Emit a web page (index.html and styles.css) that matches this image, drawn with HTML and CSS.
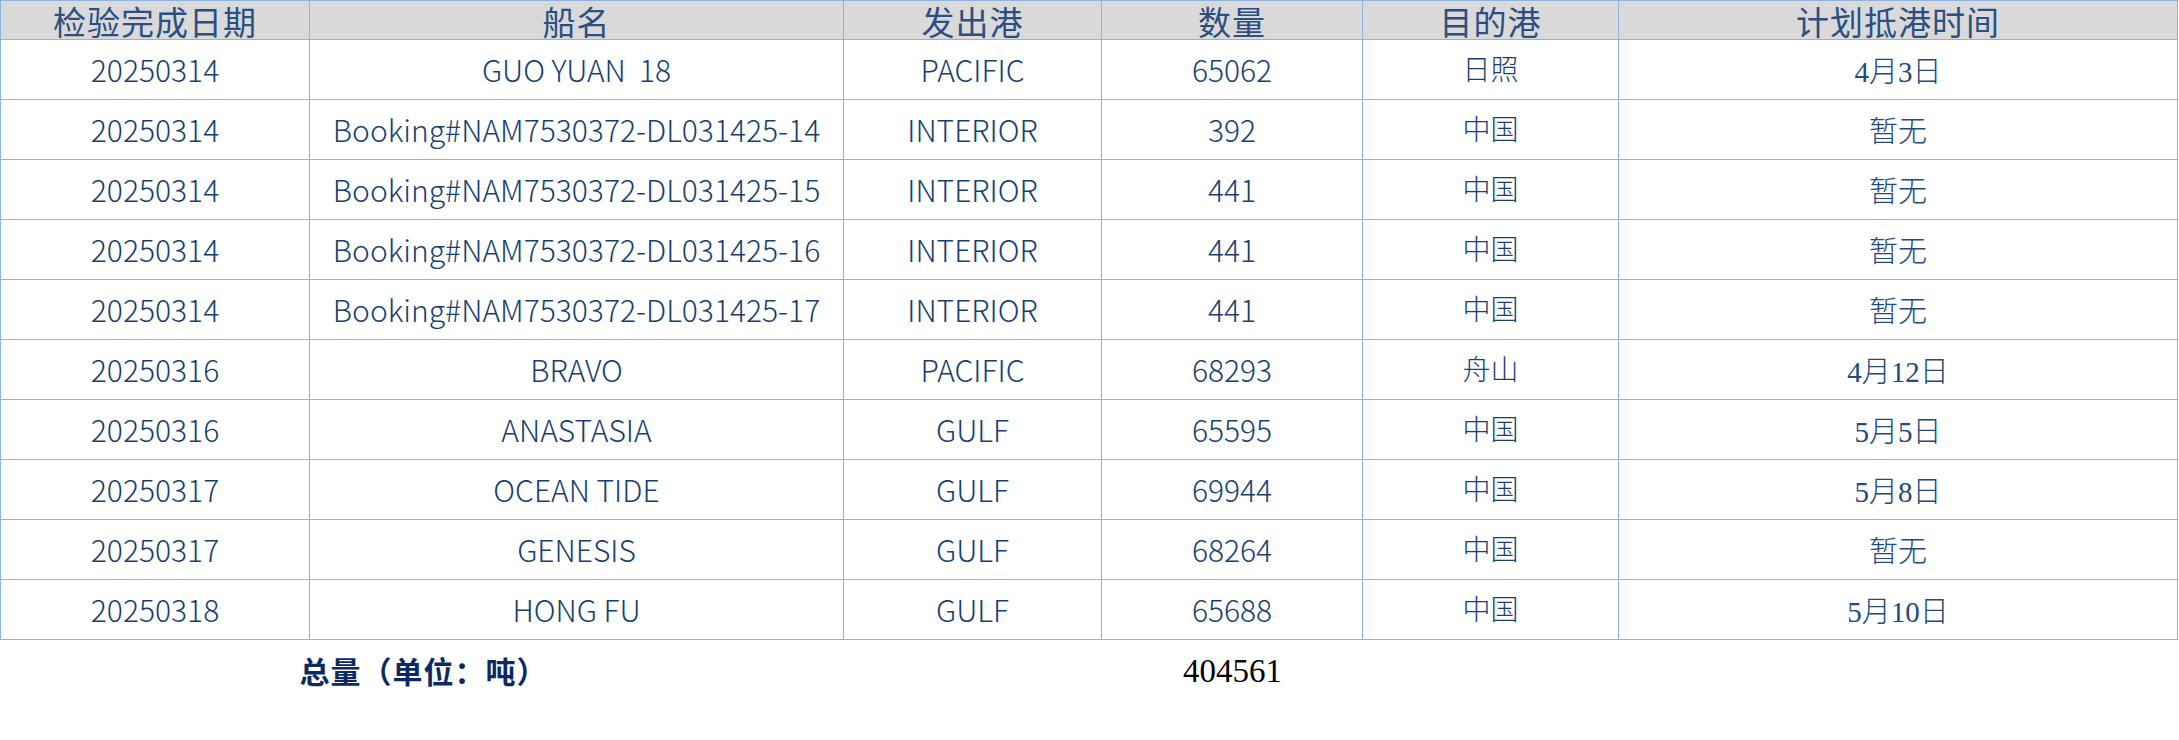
FILE: index.html
```html
<!DOCTYPE html>
<html lang="zh-CN">
<head>
<meta charset="utf-8">
<title>检验完成日期</title>
<link rel="stylesheet" href="styles.css">
</head>
<body>
<div class="sheet">
  <div class="grid">
    <div class="th">检验完成日期</div>
    <div class="th">船名</div>
    <div class="th">发出港</div>
    <div class="th">数量</div>
    <div class="th">目的港</div>
    <div class="th">计划抵港时间</div>

    <div class="td">20250314</div><div class="td">GUO YUAN&nbsp; 18</div><div class="td">PACIFIC</div><div class="td">65062</div><div class="td dest">日照</div><div class="td eta">4月3日</div>
    <div class="td">20250314</div><div class="td">Booking#NAM7530372-DL031425-14</div><div class="td">INTERIOR</div><div class="td">392</div><div class="td dest">中国</div><div class="td eta">暂无</div>
    <div class="td">20250314</div><div class="td">Booking#NAM7530372-DL031425-15</div><div class="td">INTERIOR</div><div class="td">441</div><div class="td dest">中国</div><div class="td eta">暂无</div>
    <div class="td">20250314</div><div class="td">Booking#NAM7530372-DL031425-16</div><div class="td">INTERIOR</div><div class="td">441</div><div class="td dest">中国</div><div class="td eta">暂无</div>
    <div class="td">20250314</div><div class="td">Booking#NAM7530372-DL031425-17</div><div class="td">INTERIOR</div><div class="td">441</div><div class="td dest">中国</div><div class="td eta">暂无</div>
    <div class="td">20250316</div><div class="td">BRAVO</div><div class="td">PACIFIC</div><div class="td">68293</div><div class="td dest">舟山</div><div class="td eta">4月12日</div>
    <div class="td">20250316</div><div class="td">ANASTASIA</div><div class="td">GULF</div><div class="td">65595</div><div class="td dest">中国</div><div class="td eta">5月5日</div>
    <div class="td">20250317</div><div class="td">OCEAN TIDE</div><div class="td">GULF</div><div class="td">69944</div><div class="td dest">中国</div><div class="td eta">5月8日</div>
    <div class="td">20250317</div><div class="td">GENESIS</div><div class="td">GULF</div><div class="td">68264</div><div class="td dest">中国</div><div class="td eta">暂无</div>
    <div class="td">20250318</div><div class="td">HONG FU</div><div class="td">GULF</div><div class="td">65688</div><div class="td dest">中国</div><div class="td eta">5月10日</div>
  </div>
  <div class="total">
    <div class="total-label">总量（单位：吨）</div>
    <div class="total-gap"></div>
    <div class="total-value">404561</div>
  </div>
</div>
</body>
</html>
```

FILE: styles.css
```css
html, body {
  margin: 0;
  padding: 0;
  background: #ffffff;
}

.sheet {
  width: 2179px;
  height: 740px;
  font-family: "Noto Sans CJK SC", "Noto Sans", sans-serif;
}

.grid {
  display: grid;
  grid-template-columns: 309px 534px 258px 261px 256px 559px;
  grid-template-rows: 39px repeat(10, 60px);
  border-left: 1px solid #8db3e2;
  border-top: 1px solid #8db3e2;
  width: 2177px;
}

.th, .td {
  border-right: 1px solid #8db3e2;
  border-bottom: 1px solid #8db3e2;
  display: flex;
  align-items: center;
  justify-content: center;
  white-space: nowrap;
}

.th {
  background: #d9d9d9;
  color: #2b4f83;
  font-size: 33px;
  line-height: 36px;
  letter-spacing: 1px;
  padding-top: 2px;
}

.td {
  color: #173f72;
  font-size: 30px;
  font-weight: 300;
  line-height: 40px;
  padding-bottom: 2px;
}

.td.dest {
  font-size: 28px;
  padding-bottom: 4px;
}

.td.eta {
  font-family: "Liberation Serif", "Noto Sans CJK SC", serif;
  font-size: 29px;
  font-weight: 300;
  color: #23497d;
  padding-top: 4px;
  padding-bottom: 0;
}

.total {
  display: grid;
  grid-template-columns: 843px 258px 261px;
  height: 60px;
  align-items: center;
}

.total-label {
  text-align: center;
  font-weight: 700;
  font-size: 30px;
  letter-spacing: 1px;
  color: #0b2a63;
  padding-left: 4px;
}

.total-value {
  text-align: center;
  font-family: "Liberation Serif", serif;
  font-size: 33px;
  color: #000000;
  padding-top: 2px;
  padding-left: 2px;
}
```
